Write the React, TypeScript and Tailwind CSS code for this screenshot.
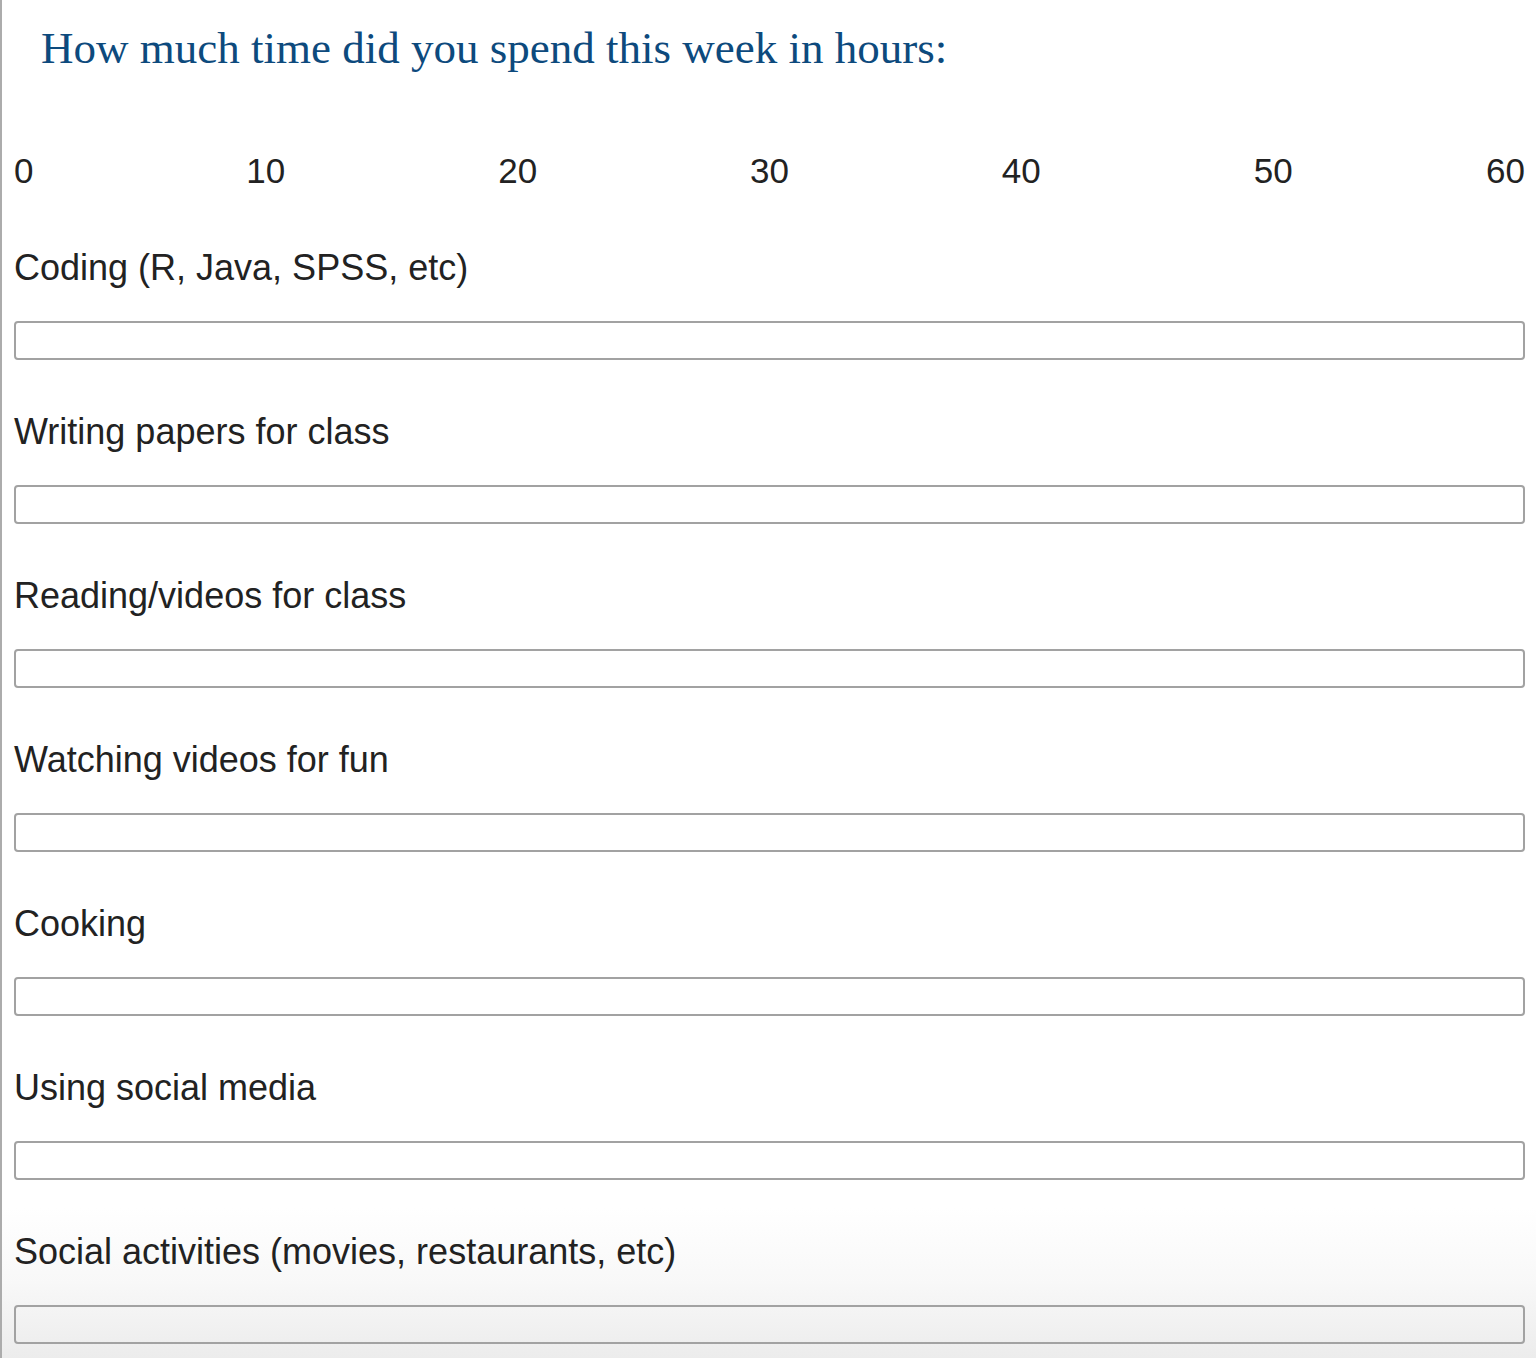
const scale = [0, 10, 20, 30, 40, 50, 60]

const activities = [
  'Coding (R, Java, SPSS, etc)',
  'Writing papers for class',
  'Reading/videos for class',
  'Watching videos for fun',
  'Cooking',
  'Using social media',
  'Social activities (movies, restaurants, etc)',
]

function ScaleLabels() {
  return (
    <div className="flex justify-between h-[40px] items-center text-[35px] text-[#222] leading-none">
      {scale.map((n, i) => (
        <div
          key={n}
          className={`w-0 flex whitespace-nowrap ${i === 0 ? 'justify-start' : i === scale.length - 1 ? 'justify-end' : 'justify-center'}`}
        >
          {n}
        </div>
      ))}
    </div>
  )
}

function ActivityRow({ label }: { label: string }) {
  return (
    <div className="flex flex-col">
      <div className="h-[40px] flex items-center text-[36px] text-[#222] leading-none">{label}</div>
      <input
        type="text"
        className="mt-[33px] h-[39px] w-full border-2 border-[#a2a2a2] rounded-[4px] bg-transparent outline-none"
      />
    </div>
  )
}

export default function App() {
  return (
    <div
      className="relative min-h-[1358px] overflow-hidden bg-white border-l-2 border-[#acacac]"
      style={{ fontFamily: '"Liberation Sans", Arial, sans-serif' }}
    >
      {/* bottom fade, sits behind the form */}
      <div className="pointer-events-none absolute inset-x-0 bottom-0 h-[150px] bg-gradient-to-b from-white via-[#f8f8f8] to-[#ececec]" />
      <div className="relative">
        <h1
          className="pl-[39px] pt-[24px] text-[45px] leading-[48px] text-[#0d4a7d]"
          style={{ fontFamily: '"Liberation Serif", "DejaVu Serif", serif' }}
        >
          How much time did you spend this week in hours:
        </h1>
        <div className="pl-[12px] pr-[11px]">
          <div className="mt-[78px]">
            <ScaleLabels />
          </div>
          <div className="mt-[58px] flex flex-col gap-[52px]">
            {activities.map(a => (
              <ActivityRow key={a} label={a} />
            ))}
          </div>
        </div>
      </div>
    </div>
  )
}
